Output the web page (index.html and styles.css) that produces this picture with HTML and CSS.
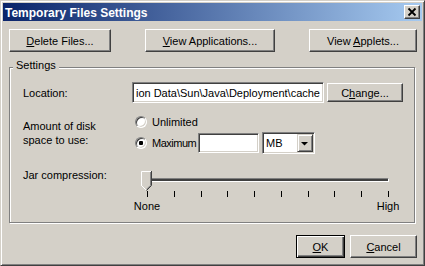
FILE: index.html
```html
<!DOCTYPE html>
<html lang="en">
<head>
    <meta charset="UTF-8">
    <title>Temporary Files Settings</title>
    <link rel="stylesheet" href="styles.css">
</head>
<body>
<div class="window">
    <div class="titlebar">
        <span class="title">Temporary Files Settings</span>
        <span class="close">
            <svg width="14" height="12" viewBox="0 0 14 12">
                <path d="M3.5 2.5 L10.5 9.5 M10.5 2.5 L3.5 9.5" stroke="#000" stroke-width="1.8" fill="none"/>
            </svg>
        </span>
    </div>
    <div class="content">
        <div class="toolbar">
            <button class="btn btn-delete"><u>D</u>elete Files...</button>
            <button class="btn btn-apps"><u>V</u>iew Applications...</button>
            <button class="btn btn-applets">View <u>A</u>pplets...</button>
        </div>

        <div class="group">
            <span class="group-title">Settings</span>

            <div class="row row-location">
                <span class="label">Location:</span>
                <div class="field field-path"><span>ion Data\Sun\Java\Deployment\cache</span></div>
                <button class="btn btn-change">C<u>h</u>ange...</button>
            </div>

            <div class="row row-disk">
                <span class="label">Amount of disk<br>space to use:</span>
                <div class="radios">
                    <div class="radio-line line-unlimited">
                        <span class="radio"></span>
                        <span>Unlimited</span>
                    </div>
                    <div class="radio-line line-maximum">
                        <span class="radio checked"></span>
                        <span class="radio-text">Maximum</span>
                        <div class="field field-size"></div>
                        <div class="combo">
                            <span class="combo-value">MB</span>
                            <span class="combo-btn">
                                <svg width="14" height="16" viewBox="0 0 14 16">
                                    <path d="M3 7 H10 L6.5 10.5 Z" fill="#000"/>
                                </svg>
                            </span>
                        </div>
                    </div>
                </div>
            </div>

            <div class="row row-jar">
                <span class="label label-jar">Jar compression:</span>
                <div class="slider">
                    <div class="slider-body">
                        <div class="track"></div>
                        <svg class="thumb" width="11" height="20" viewBox="0 0 11 20">
                            <path d="M0.5 0.5 H10.5 V14.5 L5.5 19.5 L0.5 14.5 Z" fill="#d4d0c8"/>
                            <path d="M0.5 15 V0.5 H10" stroke="#fff" fill="none"/>
                            <path d="M0.5 14.5 L5 19" stroke="#fff" fill="none"/>
                            <path d="M10.5 0 V14.5 L5.5 19.5" stroke="#404040" fill="none"/>
                            <path d="M9.5 1 V14.3 L5.5 18.3" stroke="#808080" fill="none"/>
                        </svg>
                    </div>
                    <div class="ticks">
                        <span></span><span></span><span></span><span></span><span></span>
                        <span></span><span></span><span></span><span></span><span></span>
                    </div>
                    <div class="scale-labels">
                        <span>None</span>
                        <span>High</span>
                    </div>
                </div>
            </div>
        </div>

        <div class="footer">
            <button class="btn btn-default btn-ok"><u>O</u>K</button>
            <button class="btn btn-cancel"><u>C</u>ancel</button>
        </div>
    </div>
</div>
</body>
</html>
```

FILE: styles.css
```css
body {
    margin: 0;
    padding: 0;
    font-family: "Liberation Sans", Arial, sans-serif;
    font-size: 11px;
    color: #000;
    background-color: #d4d0c8;
}

/* 2px frame: the border is the outer line, the shadows the inner one */
.window {
    width: 425px;
    height: 266px;
    box-sizing: border-box;
    padding: 2px;
    border: 1px solid;
    border-color: #d4d0c8 #404040 #404040 #d4d0c8;
    box-shadow: inset 1px 1px #fff, inset -1px -1px #808080;
    background-color: #d4d0c8;
    display: flex;
    flex-direction: column;
}

.titlebar {
    height: 18px;
    flex-shrink: 0;
    display: flex;
    align-items: center;
    justify-content: space-between;
    padding: 0 2px;
    background: linear-gradient(to right, #0a246a, #a6caf0);
}

.title {
    color: #fff;
    font-weight: bold;
    font-size: 12px;
    line-height: 14px;
    padding-top: 1px;
}

.close {
    width: 16px;
    height: 14px;
    box-sizing: border-box;
    display: flex;
    align-items: center;
    justify-content: center;
    background-color: #d4d0c8;
    border: 1px solid;
    border-color: #fff #404040 #404040 #fff;
    box-shadow: inset -1px -1px #808080;
}

.close svg {
    display: block;
}

.content {
    padding: 8px 5px 0 6px;
    display: flex;
    flex-direction: column;
}

.btn {
    box-sizing: border-box;
    height: 23px;
    padding: 0;
    font-family: "Liberation Sans", Arial, sans-serif;
    font-size: 11px;
    color: #000;
    background-color: #d4d0c8;
    border: 1px solid;
    border-color: #fff #404040 #404040 #fff;
    box-shadow: inset -1px -1px #808080;
    border-radius: 0;
}

.btn-default {
    border-color: #000;
    box-shadow: inset 1px 1px #fff, inset -1px -1px #404040, inset -2px -2px #808080;
}

.toolbar {
    display: flex;
    justify-content: space-between;
}

.btn-delete {
    width: 102px;
}

.btn-apps {
    width: 130px;
}

.btn-applets {
    width: 108px;
}

.group {
    position: relative;
    width: 406px;
    height: 156px;
    box-sizing: border-box;
    margin-top: 15px;
    padding: 14px 0 0 13px;
    border: 1px solid #808080;
    box-shadow: inset 1px 1px #fff, 1px 1px 0 #fff;
}

.group-title {
    position: absolute;
    left: 3px;
    top: -9px;
    padding: 0 3px 0 3px;
    line-height: 13px;
    background-color: #d4d0c8;
}

.row {
    display: flex;
    align-items: center;
}

.label {
    width: 109px;
    flex-shrink: 0;
    line-height: 14px;
}

.field {
    box-sizing: border-box;
    background-color: #fff;
    border: 1px solid;
    border-color: #808080 #fff #fff #808080;
    box-shadow: inset 1px 1px #404040, inset -1px -1px #d4d0c8;
}

.field-path {
    width: 192px;
    height: 21px;
    display: flex;
    align-items: center;
    justify-content: flex-end;
    overflow: hidden;
    white-space: nowrap;
    padding: 0 3px 0 2px;
}

.btn-change {
    width: 76px;
    height: 19px;
    margin-left: 3px;
}

.row-disk {
    margin-top: 9px;
}

.radio-line {
    display: flex;
    align-items: center;
}

.line-unlimited {
    height: 20px;
}

.line-maximum {
    height: 22px;
}

.radio {
    position: relative;
    width: 12px;
    height: 12px;
    box-sizing: border-box;
    margin: 0 5px 0 3px;
    border-radius: 50%;
    background-color: #fff;
    border: 1px solid;
    border-color: #808080 #fff #fff #808080;
    box-shadow: inset 1px 1px #404040, inset -1px -1px #d4d0c8;
}

.radio.checked::after {
    content: "";
    position: absolute;
    left: 3px;
    top: 3px;
    width: 4px;
    height: 4px;
    border-radius: 1px;
    background-color: #000;
}

.radio-text {
    width: 46px;
    white-space: nowrap;
    letter-spacing: -0.5px;
}

.field-size {
    width: 61px;
    height: 20px;
}

.combo {
    width: 53px;
    height: 22px;
    margin-left: 3px;
    box-sizing: border-box;
    display: flex;
    align-items: center;
    justify-content: space-between;
    background-color: #fff;
    border: 1px solid;
    border-color: #808080 #fff #fff #808080;
    box-shadow: inset 1px 1px #404040, inset -1px -1px #d4d0c8;
    padding: 1px;
}

.combo-value {
    padding-left: 2px;
}

.combo-btn {
    width: 16px;
    height: 18px;
    box-sizing: border-box;
    display: flex;
    align-items: center;
    justify-content: center;
    background-color: #d4d0c8;
    border: 1px solid;
    border-color: #d4d0c8 #404040 #404040 #d4d0c8;
    box-shadow: inset 1px 1px #fff, inset -1px -1px #808080;
}

.combo-btn svg {
    display: block;
}

.row-jar {
    margin-top: 17px;
    align-items: flex-start;
}

.label-jar {
    line-height: 13px;
    margin-top: -2px;
}

.slider {
    width: 253px;
    margin-left: 9px;
}

.slider-body {
    position: relative;
    height: 20px;
}

.track {
    width: 246px;
    height: 4px;
    box-sizing: border-box;
    margin: 0 0 0 2px;
    position: relative;
    top: 7px;
    background-color: #404040;
    border: 1px solid;
    border-color: #808080 #fff #fff #808080;
}

.thumb {
    position: absolute;
    left: 0;
    top: 0;
    display: block;
}

.ticks {
    height: 6px;
    display: flex;
    justify-content: space-between;
    padding: 0 5px 0 6px;
}

.ticks span {
    width: 1px;
    height: 6px;
    background-color: #000;
}

.scale-labels {
    display: flex;
    justify-content: space-between;
    margin: 3px -14px 0 -14px;
    line-height: 13px;
}

.scale-labels span {
    width: 40px;
    text-align: center;
}

.footer {
    display: flex;
    justify-content: flex-end;
    gap: 5px;
    margin-top: 12px;
}

.btn-ok {
    width: 49px;
}

.btn-cancel {
    width: 67px;
}
```
